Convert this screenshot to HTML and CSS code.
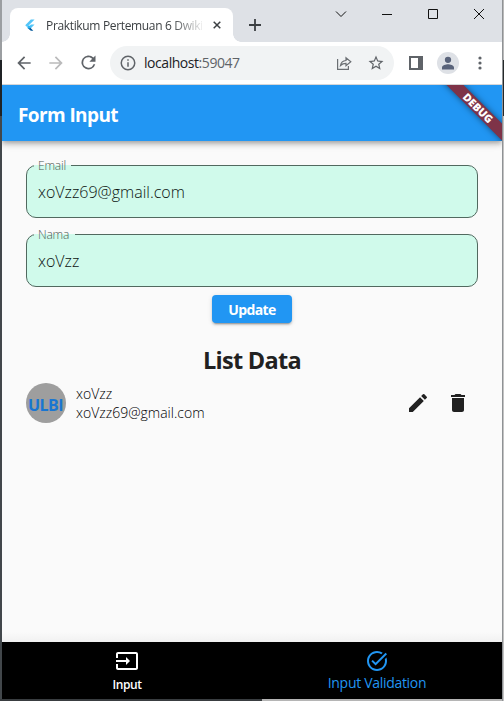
FILE: index.html
```html
<!DOCTYPE html>
<html lang="id">
<head>
<meta charset="utf-8">
<title>Praktikum Pertemuan 6 Dwiki</title>
<link rel="stylesheet" href="styles.css">
</head>
<body>
<div class="window">
  <header class="tabstrip">
    <div class="tab">
      <svg class="favicon" width="10" height="12" viewBox="0 0 24 28"><path fill="#54c5f8" d="M14 1h9L5 19l-4.500-4.500zM14 13h9l-9 9-4.500-4.500z"/><path fill="#01579b" d="M9.500 17.500l4.500 4.500 6 6h-6l-8-7z"/><path fill="#29b6f6" d="M5 19l4.500-4.500L14 19l-4.500 4.500z"/></svg>
      <span class="tab-title">Praktikum Pertemuan 6 Dwiki</span>
      <svg class="tab-close" width="8" height="8" viewBox="0 0 8 8"><path d="M.7.700l6.600 6.600M7.300.7L.7 7.300" stroke="#3c4043" stroke-width="1.500"/></svg>
    </div>
    <svg class="newtab" width="12" height="12" viewBox="0 0 12 12"><path d="M6 0v12M0 6h12" stroke="#3c4043" stroke-width="1.800"/></svg>
    <div class="controls">
      <svg width="12" height="12" viewBox="0 0 12 12"><path d="M1 3.500l5 5 5-5"/></svg>
      <svg width="12" height="12" viewBox="0 0 12 12"><path d="M1 6.500h10"/></svg>
      <svg width="12" height="12" viewBox="0 0 12 12"><path d="M1.500 1.500h9v9h-9z"/></svg>
      <svg width="12" height="12" viewBox="0 0 12 12"><path d="M1 1l10 10M11 1L1 11"/></svg>
    </div>
  </header>
  <div class="toolbar">
    <svg class="back" width="20" height="20" viewBox="0 0 24 24" fill="#5f6368"><path d="M20 11H7.830l5.590-5.590L12 4l-8 8 8 8 1.410-1.410L7.830 13H20z"/></svg>
    <svg class="forward" width="20" height="20" viewBox="0 0 24 24" fill="#bababb"><path d="M4 11h12.170l-5.590-5.590L12 4l8 8-8 8-1.410-1.410L16.170 13H4z"/></svg>
    <svg class="reload" width="21" height="21" viewBox="0 0 24 24" fill="#5f6368"><path d="M17.650 6.350A8 8 0 1 0 19.730 14h-2.080A6 6 0 1 1 12 6c1.660 0 3.140.69 4.220 1.780L13 11h7V4z"/></svg>
    <div class="address">
      <svg width="18" height="18" viewBox="0 0 24 24" fill="#5f6368"><path d="M11 7h2v2h-2zm0 4h2v6h-2zm1-9a10 10 0 1 0 0 20 10 10 0 0 0 0-20zm0 18a8 8 0 1 1 0-16 8 8 0 0 1 0 16z"/></svg>
      <span class="url">localhost<span class="port">:59047</span></span>
      <svg class="share" width="16" height="16" viewBox="0 0 16 16" fill="none" stroke="#6b6f73" stroke-width="1.200"><path d="M1.600 4v10.400h10.800V11"/><path d="M4.500 10.500c.5-3.200 2.300-4.800 5.500-5V2.700l4.800 4-4.800 4V8.300c-2.500 0-4 .6-5.500 2.200z"/></svg>
      <svg width="18" height="18" viewBox="0 0 24 24" fill="#5f6368"><path d="M22 9.240l-7.190-.62L12 2 9.190 8.630 2 9.240l5.460 4.730L5.820 21 12 17.270 18.180 21l-1.630-7.030zM12 15.400l-3.760 2.270 1-4.280-3.320-2.880 4.380-.38L12 6.100l1.710 4.040 4.380.38-3.320 2.880 1 4.280z"/></svg>
    </div>
    <svg class="panel" width="14" height="14" viewBox="0 0 14 14"><path fill="#5f6368" fill-rule="evenodd" d="M0 0h14v14H0zM2 2v10h7V2z"/></svg>
    <div class="profile"><svg width="18" height="18" viewBox="0 0 24 24" fill="#59637a"><path d="M12 12a4.200 4.200 0 1 0 0-8.400 4.200 4.200 0 0 0 0 8.400zm0 1.800c-2.670 0-8 1.340-8 4.200v2.500h16V18c0-2.860-5.330-4.200-8-4.200z"/></svg></div>
    <svg class="more" width="4" height="14" viewBox="0 0 4 14" fill="#5f6368"><circle cx="2" cy="2" r="1.600"/><circle cx="2" cy="7" r="1.600"/><circle cx="2" cy="12" r="1.600"/></svg>
  </div>
  <div class="appbar">
    <h1>Form Input</h1>
    <div class="banner-clip"><div class="banner">DEBUG</div></div>
  </div>
  <main class="page">
    <div class="field"><span class="label label-email">Email</span><span class="value">xoVzz69@gmail.com</span></div>
    <div class="field"><span class="label label-nama">Nama</span><span class="value">xoVzz</span></div>
    <button class="update">Update</button>
    <h2>List Data</h2>
    <div class="item">
      <div class="avatar"><span>ULBI</span></div>
      <div class="person"><div>xoVzz</div><div>xoVzz69@gmail.com</div></div>
      <svg class="edit" width="24" height="24" viewBox="0 0 24 24" fill="#212121"><path d="M3 17.250V21h3.750L17.810 9.940l-3.750-3.750zM20.710 7.040a1 1 0 0 0 0-1.410l-2.340-2.340a1 1 0 0 0-1.410 0l-1.830 1.830 3.750 3.750z"/></svg>
      <svg class="delete" width="24" height="24" viewBox="0 0 24 24" fill="#212121"><path d="M6 19c0 1.100.9 2 2 2h8c1.100 0 2-.9 2-2V7H6zM19 4h-3.500l-1-1h-5l-1 1H5v2h14z"/></svg>
    </div>
  </main>
  <nav class="bottomnav">
    <div class="dest">
      <svg width="24" height="24" viewBox="0 0 24 24" fill="#fff"><path d="M21 3.010H3c-1.100 0-2 .9-2 2V9h2V4.990h18v14.030H3V15H1v4.010c0 1.100.9 1.980 2 1.980h18c1.100 0 2-.88 2-1.980v-14c0-1.110-.9-2-2-2zM11 16l4-4-4-4v3H1v2h10z"/></svg>
      <span>Input</span>
    </div>
    <div class="dest active">
      <svg width="24" height="24" viewBox="0 0 24 24" fill="#2196f3"><path d="M22 5.180L10.590 16.600l-4.240-4.240 1.410-1.410 2.830 2.830 10-10zM19.790 10.220c.13.570.21 1.170.21 1.780 0 4.420-3.580 8-8 8s-8-3.580-8-8 3.580-8 8-8c1.580 0 3.040.46 4.280 1.250l1.440-1.440A9.900 9.900 0 0 0 12 2C6.480 2 2 6.480 2 12s4.480 10 10 10 10-4.480 10-10c0-1.190-.22-2.330-.6-3.390z"/></svg>
      <span>Input Validation</span>
    </div>
  </nav>
</div>
</body>
</html>
```
FILE: styles.css
```css
* { box-sizing: border-box; }
body {
  margin: 0;
  height: 701px;
  padding: 0 2px 2px;
  overflow: hidden;
  font-family: "Open Sans", "Noto Sans", sans-serif;
  background:
    linear-gradient(#8f9295, #8f9295) 502px 0 / 1px 701px no-repeat,
    linear-gradient(#b9b9b9 0 60px, #25282a 60px 116px, #c3c3c3 116px) 503px 0 / 1px 701px no-repeat,
    linear-gradient(90deg, #393d40 0 262px, #b5b5b5 262px) 0 699px / 504px 2px no-repeat,
    linear-gradient(#9b9ea1 0 60px, #1f2225 60px 116px, #42474b 116px);
}
svg { display: block; flex: none; }
.window { width: 500px; height: 699px; display: flex; flex-direction: column; background: #fafafa; }

.tabstrip { height: 42px; flex: none; background: #dee1e6; display: flex; align-items: flex-start; }
.tab {
  position: relative;
  width: 223px; height: 34px; margin: 8px 0 0 8px; padding: 0 12px 0 15px;
  border-radius: 8px 8px 0 0; background: #fff;
  display: flex; align-items: center;
}
.tab::before, .tab::after { content: ""; position: absolute; bottom: 0; width: 8px; height: 8px; }
.tab::before { left: -8px; background: radial-gradient(circle at 0 0, transparent 7.500px, #fff 8px); }
.tab::after { right: -8px; background: radial-gradient(circle at 100% 0, transparent 7.500px, #fff 8px); }
.favicon { margin-right: 11px; }
.tab-title {
  width: 156px; white-space: nowrap;
  font-size: 12px; letter-spacing: -.34px; color: #3c4043;
  -webkit-mask-image: linear-gradient(90deg, #000 125px, transparent 160px);
  mask-image: linear-gradient(90deg, #000 125px, transparent 160px);
}
.tab-close { margin-left: auto; }
.newtab { margin: 19px 0 0 16px; }
.controls { margin: 8px 17px 0 auto; display: flex; gap: 34px; }
.controls svg { fill: none; stroke: #111; stroke-width: 1; }

.toolbar { height: 43px; flex: none; padding: 0 20px 1px 12px; background: #fff; border-bottom: 1px solid #d5d6d8; display: flex; align-items: center; }
.forward { margin-left: 12px; }
.reload { margin-left: 12px; }
.address {
  width: 284px; height: 34px; margin-left: 11px; padding: 0 9px; border-radius: 17px;
  background: #f1f3f4; display: flex; align-items: center;
}
.url { margin-left: 7px; font-size: 14px; letter-spacing: -.45px; color: #202124; }
.port { color: #5f6368; }
.share { margin: 0 15px 0 auto; }
.panel { margin-left: 15px; }
.profile { width: 22px; height: 22px; margin-left: 14px; border-radius: 50%; background: #dee1e6; display: grid; place-items: center; }
.more { margin-left: auto; margin-right: 0; }

.appbar {
  position: relative; z-index: 1; height: 56px; flex: none; padding-left: 16px;
  background: #2196f3; display: flex; align-items: center;
  box-shadow: 0 2px 4px -1px rgba(0,0,0,.2), 0 4px 5px rgba(0,0,0,.14), 0 1px 10px rgba(0,0,0,.12);
  clip-path: inset(0 0 -16px 0);
}
h1 { margin: 4px 0 0; color: #fff; font-size: 19px; font-weight: 700; line-height: 24px; letter-spacing: -.6px; }
.banner-clip { position: absolute; top: 0; right: 0; width: 70px; height: 56px; overflow: hidden; }
.banner {
  position: absolute; left: -10px; top: 17px; width: 112px; height: 12px;
  transform: rotate(45deg); background: #7e3348; color: #fff;
  font-size: 10.800px; font-weight: 800; line-height: 12px; text-align: center;
  box-shadow: 0 0 6px rgba(0,0,0,.5);
}

.page { flex: 1; padding: 24px 24px 0; display: flex; flex-direction: column; background: linear-gradient(#fafafa calc(100% - 10px), #f1f1f1); }
.field {
  position: relative; height: 53px; flex: none; margin-bottom: 16px; padding: 0 11px;
  border: 1px solid #51695f; border-radius: 10px; background: #d0faeb;
  display: flex; align-items: center; color: #0c1411;
}
.label {
  position: absolute; top: -9px; left: 7px; padding: 0 4px;
  font-size: 12px; line-height: 18px; font-weight: 300; color: #4c5853;
  background: linear-gradient(#fafafa 0 8px, #d0faeb 8px);
}
.label-email { letter-spacing: -.2px; width: 37px; }
.label-nama { letter-spacing: -.2px; width: 41px; }
.value { font-size: 16px; font-weight: 300; letter-spacing: 0; }
.update {
  align-self: center; width: 80px; height: 28px; margin-top: -8px; padding: 2px 0 0; border: 0; border-radius: 4px;
  background: #2196f3; color: #fff; font: 700 14px/20px "Open Sans", sans-serif; letter-spacing: -.6px;
  box-shadow: 0 3px 1px -2px rgba(0,0,0,.2), 0 2px 2px rgba(0,0,0,.14), 0 1px 5px rgba(0,0,0,.12);
}
h2 { margin: 20px 0 5px; text-align: center; font-size: 23.500px; line-height: 35px; font-weight: 700; letter-spacing: -.7px; color: #212121; }
.item { height: 40px; display: flex; align-items: center; }
.avatar { width: 40px; height: 40px; border-radius: 50%; background: #9e9e9e; display: grid; place-items: center; color: #1976d2; font-size: 16px; font-weight: 700; letter-spacing: -.5px; }
.avatar span { margin: 3px 1px 0 0; }
.person { margin-left: 10px; font-size: 14px; font-weight: 300; line-height: 19px; letter-spacing: 0; color: #000; }
.edit { margin-left: auto; }
.delete { margin: 0 8px 0 16px; }

.bottomnav { height: 57px; flex: none; background: #000; display: flex; }
.dest { flex: 1; padding-top: 7px; display: flex; flex-direction: column; align-items: center; color: #fff; font-size: 12px; font-weight: 600; line-height: 22px; letter-spacing: -.4px; }
.dest span { margin-top: 1px; }
.active { color: #2196f3; font-size: 14px; font-weight: 400; line-height: 20px; letter-spacing: -.3px; }
.active span { margin-top: 0; }
```
